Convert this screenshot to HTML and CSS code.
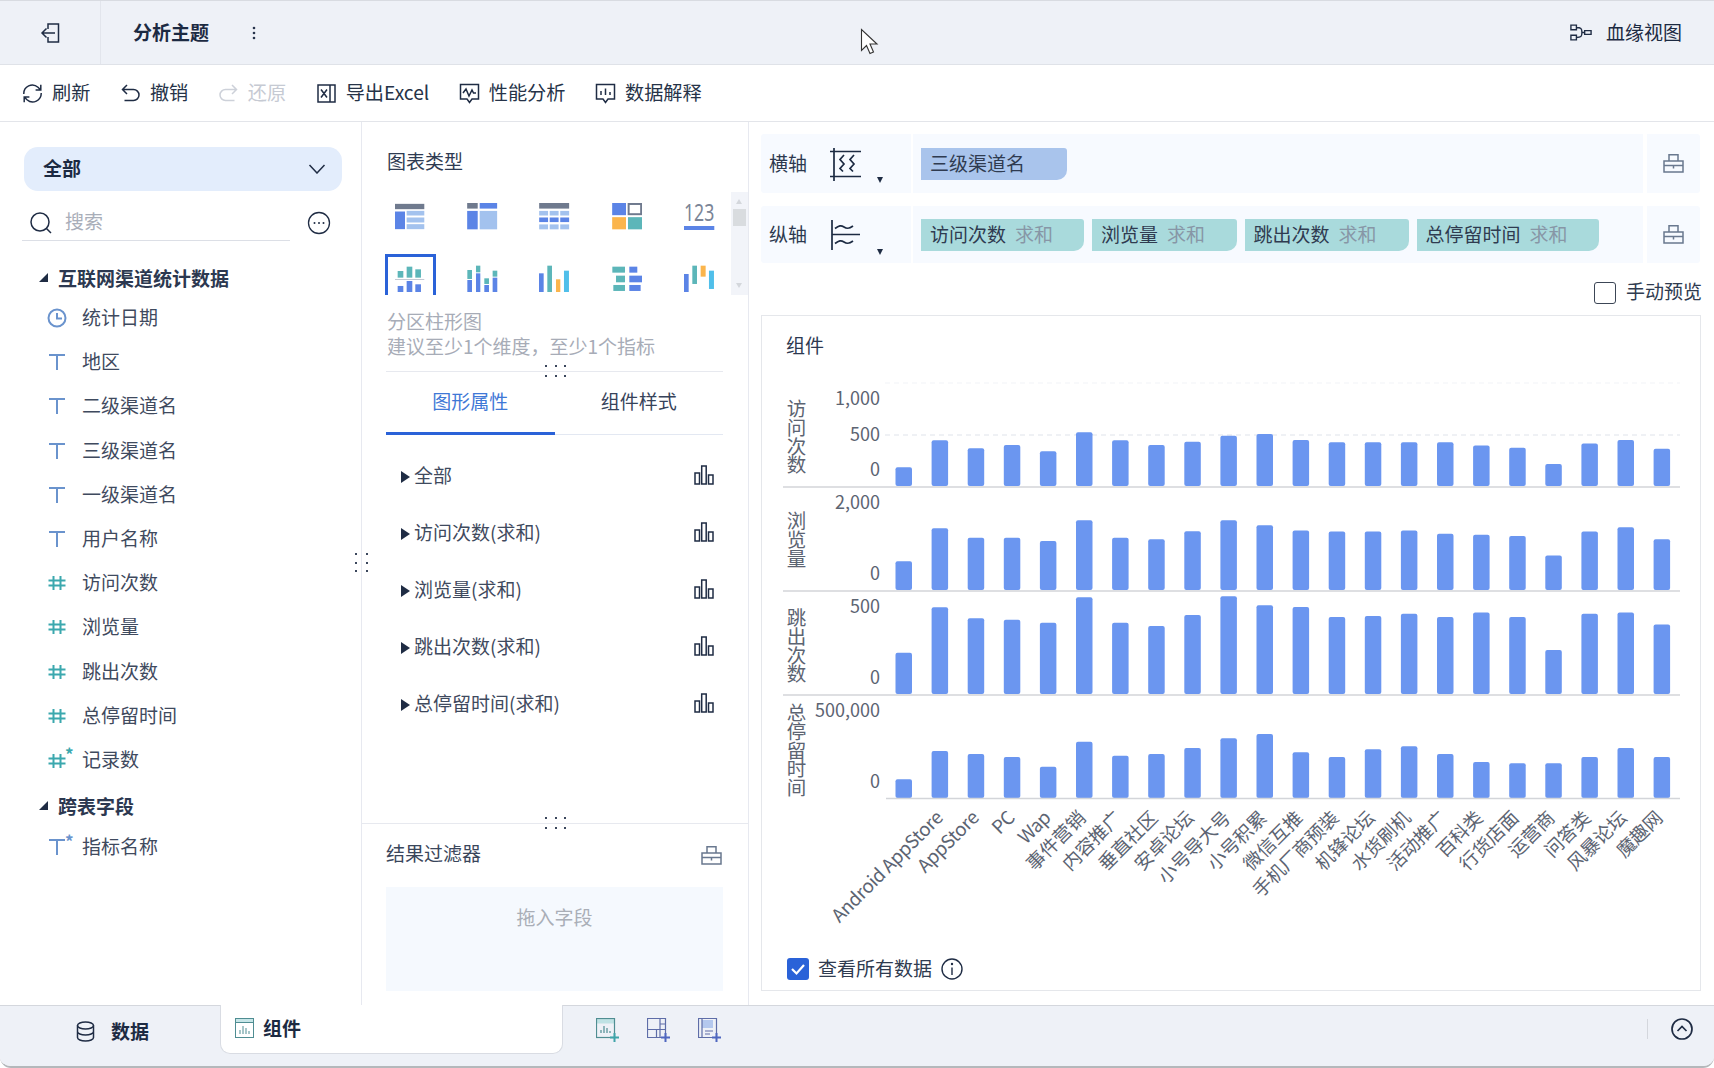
FILE: index.html
```html
<!DOCTYPE html>
<html lang="zh">
<head>
<meta charset="utf-8">
<title>分析主题</title>
<link rel="stylesheet" href="styles.css">
</head>
<body>
<div class="app">
  <header class="topbar">
    <div class="back">
      <svg class="ico" width="20" height="20" viewBox="0 0 20 20"><path d="M8 6V1h10.500v18H8V14M15 10H2M6.500 5.500L2 10l4.500 4.500"/></svg>
    </div>
    <div class="title">分析主题</div>
    <svg class="kebab" width="4" height="14" viewBox="0 0 4 14"><circle cx="2" cy="2" r="1.300"/><circle cx="2" cy="7" r="1.300"/><circle cx="2" cy="12" r="1.300"/></svg>
    <div class="lineage">
      <svg class="ico" width="22" height="17" viewBox="0 0 24 18"><path d="M1 1h6v5H1zM1 12h6v5H1zM16 7h7v4h-7zM7 3.500c5 0 6 1 6 5.500s-1 5.500-6 5.500M12.500 9H16"/></svg>
      <span>血缘视图</span>
    </div>
  </header>

  <nav class="toolbar">
    <div class="tool"><svg class="ico" width="21" height="21" viewBox="0 0 21 21"><path d="M1.800 11A8.500 8.500 0 0 1 16 4.300L18.500 6.800M18.800 1.800v5.200h-5.200M19.200 10A8.500 8.500 0 0 1 5 16.700L2.500 14.200M2.200 19.200V14h5.200"/></svg><span>刷新</span></div>
    <div class="tool"><svg class="ico" width="21" height="21" viewBox="0 0 20 21"><path d="M6.500 2L2 6.500 6.500 11M2 6.500h11a5.500 5.500 0 0 1 0 11H4"/></svg><span>撤销</span></div>
    <div class="tool tool-off"><svg class="ico" width="21" height="21" viewBox="0 0 20 21"><path d="M13.500 2L18 6.500 13.500 11M18 6.500H7a5.500 5.500 0 0 0 0 11h9"/></svg><span>还原</span></div>
    <div class="tool"><svg class="ico" width="21" height="21" viewBox="0 0 21 21"><path d="M2 2h12v17H2zM14 2h5v17h-5M5 6.500l6 8M11 6.500l-6 8"/></svg><span>导出Excel</span></div>
    <div class="tool"><svg class="ico" width="21" height="21" viewBox="0 0 21 21"><path d="M1.500 1.500h18v14.500h-6.500l-2.500 3.500L8 16H1.500zM4 10l3-4 3 7 3-6 1.500 3H17"/></svg><span>性能分析</span></div>
    <div class="tool"><svg class="ico" width="21" height="21" viewBox="0 0 21 21"><path d="M1.500 1.500h18v14.500h-6.500l-2.500 3.500L8 16H1.500zM6 8v4M10.500 5.500V12M15 9v3"/></svg><span>数据解释</span></div>
  </nav>

  <main class="main">
    <aside class="fields">
      <div class="select"><span>全部</span><svg class="ico" width="18" height="10" viewBox="0 0 18 10"><path d="M1.500 1l7.500 8 7.500-8"/></svg></div>
      <div class="search-row">
        <div class="search">
          <svg class="ico" width="24" height="24" viewBox="0 0 24 24"><circle cx="11" cy="11" r="9"/><path d="M17.500 17.500L22 22"/></svg>
          <span>搜索</span>
        </div>
        <svg class="ico more" width="24" height="24" viewBox="0 0 24 24"><circle cx="12" cy="12" r="10.500"/><circle class="solid" cx="7.500" cy="12" r="1"/><circle class="solid" cx="12" cy="12" r="1"/><circle class="solid" cx="16.500" cy="12" r="1"/></svg>
      </div>

      <div class="group"><i class="tri-open"></i>互联网渠道统计数据</div>
      <div class="field"><svg class="fi fi-blue" width="20" height="20" viewBox="0 0 20 20"><circle cx="10" cy="10" r="8.500"/><path d="M10 5v5.500h5"/></svg><span>统计日期</span></div>
      <div class="field"><svg class="fi fi-blue" width="20" height="20" viewBox="0 0 20 20"><path d="M2 3h16M10 3v15"/></svg><span>地区</span></div>
      <div class="field"><svg class="fi fi-blue" width="20" height="20" viewBox="0 0 20 20"><path d="M2 3h16M10 3v15"/></svg><span>二级渠道名</span></div>
      <div class="field"><svg class="fi fi-blue" width="20" height="20" viewBox="0 0 20 20"><path d="M2 3h16M10 3v15"/></svg><span>三级渠道名</span></div>
      <div class="field"><svg class="fi fi-blue" width="20" height="20" viewBox="0 0 20 20"><path d="M2 3h16M10 3v15"/></svg><span>一级渠道名</span></div>
      <div class="field"><svg class="fi fi-blue" width="20" height="20" viewBox="0 0 20 20"><path d="M2 3h16M10 3v15"/></svg><span>用户名称</span></div>
      <div class="field"><svg class="fi fi-teal" width="20" height="20" viewBox="0 0 20 20"><path d="M6.500 3v14M13.500 3v14M1.500 7.500h17M1.500 12.500h17"/></svg><span>访问次数</span></div>
      <div class="field"><svg class="fi fi-teal" width="20" height="20" viewBox="0 0 20 20"><path d="M6.500 3v14M13.500 3v14M1.500 7.500h17M1.500 12.500h17"/></svg><span>浏览量</span></div>
      <div class="field"><svg class="fi fi-teal" width="20" height="20" viewBox="0 0 20 20"><path d="M6.500 3v14M13.500 3v14M1.500 7.500h17M1.500 12.500h17"/></svg><span>跳出次数</span></div>
      <div class="field"><svg class="fi fi-teal" width="20" height="20" viewBox="0 0 20 20"><path d="M6.500 3v14M13.500 3v14M1.500 7.500h17M1.500 12.500h17"/></svg><span>总停留时间</span></div>
      <div class="field"><svg class="fi fi-teal" width="20" height="20" viewBox="0 0 20 20"><path d="M6.500 4v14M13.500 4v14M1.500 8.500h17M1.500 13.500h17"/></svg><sup class="star star-teal">*</sup><span>记录数</span></div>
      <div class="group group-2"><i class="tri-open"></i>跨表字段</div>
      <div class="field field-2"><svg class="fi fi-blue" width="20" height="20" viewBox="0 0 20 20"><path d="M2 3h16M10 3v15"/></svg><sup class="star star-blue">*</sup><span>指标名称</span></div>
      <div class="vhandle"><i></i><i></i><i></i><i></i><i></i><i></i></div>
    </aside>

    <section class="config">
      <div class="cfg-title">图表类型</div>
      <div class="gallery">
        <div class="types">
          <div class="type"><svg width="29.300" height="27" viewBox="105 220 88 80"><rect class="gy" x="105" y="222" width="88" height="16"/><rect class="bl" x="105" y="245" width="30" height="53"/><rect class="lt" x="140" y="243" width="53" height="14"/><rect class="lt" x="140" y="263" width="53" height="15"/><rect class="lt" x="140" y="283" width="53" height="15"/></svg></div>
          <div class="type"><svg width="30.300" height="27" viewBox="320 218 91 82"><rect class="gy" x="320" y="218" width="32" height="17"/><rect class="bl" x="358" y="218" width="53" height="17"/><rect class="bl" x="320" y="242" width="32" height="56"/><rect class="lt" x="358" y="242" width="53" height="56"/></svg></div>
          <div class="type"><svg width="30.300" height="27" viewBox="537 218 91 82"><rect class="gy" x="537" y="218" width="91" height="17"/><rect class="lt" x="537" y="242" width="27" height="14"/><rect class="lt" x="569" y="242" width="27" height="14"/><rect class="lt" x="601" y="242" width="27" height="14"/><rect class="bl" x="537" y="262" width="27" height="14"/><rect class="bl" x="569" y="262" width="27" height="14"/><rect class="bl" x="601" y="262" width="27" height="14"/><rect class="lt" x="537" y="283" width="27" height="15"/><rect class="lt" x="569" y="283" width="27" height="15"/><rect class="lt" x="601" y="283" width="27" height="15"/></svg></div>
          <div class="type"><svg width="30.300" height="27" viewBox="756 218 91 82"><rect class="bl" x="756" y="218" width="42" height="37"/><rect class="outl" x="806" y="221" width="38" height="31"/><rect class="or" x="756" y="261" width="42" height="37"/><rect class="te" x="804" y="261" width="43" height="37"/></svg></div>
          <div class="type"><svg class="num-ico" width="30.300" height="27" viewBox="0 0 30.300 27"><text class="num" x="0" y="18" textLength="30.300" lengthAdjust="spacingAndGlyphs">123</text><rect class="bl" x="0" y="23" width="30.300" height="4"/></svg></div>

          <div class="type type-on"><svg width="29.300" height="27.300" viewBox="105 405 88 82"><rect class="te" x="113" y="423" width="17" height="20"/><rect class="te" x="140" y="410" width="17" height="33"/><rect class="te" x="166" y="418" width="17" height="25"/><rect class="line" x="105" y="447" width="88" height="3"/><rect class="bl" x="113" y="468" width="17" height="19"/><rect class="bl" x="140" y="453" width="17" height="34"/><rect class="bl" x="166" y="463" width="17" height="24"/></svg></div>
          <div class="type"><svg width="30.300" height="27.300" viewBox="320 405 91 82"><rect class="te" x="321" y="420" width="14" height="27"/><rect class="bl" x="321" y="450" width="14" height="37"/><rect class="te" x="347" y="407" width="13" height="20"/><rect class="bl" x="347" y="430" width="13" height="57"/><rect class="te" x="372" y="445" width="14" height="17"/><rect class="bl" x="372" y="465" width="14" height="22"/><rect class="te" x="397" y="422" width="14" height="18"/><rect class="bl" x="397" y="443" width="14" height="44"/></svg></div>
          <div class="type"><svg width="30.300" height="27.300" viewBox="537 405 91 82"><rect class="bl" x="537" y="430" width="14" height="57"/><rect class="te" x="562" y="407" width="14" height="80"/><rect class="or" x="588" y="448" width="13" height="39"/><rect class="sk" x="612" y="422" width="15" height="65"/></svg></div>
          <div class="type"><svg width="30.300" height="27.300" viewBox="756 405 91 82"><rect class="te" x="757" y="410" width="38" height="18"/><rect class="bl" x="808" y="410" width="24" height="18"/><rect class="te" x="768" y="437" width="27" height="20"/><rect class="bl" x="808" y="437" width="39" height="20"/><rect class="te" x="760" y="465" width="35" height="18"/><rect class="bl" x="808" y="465" width="34" height="18"/></svg></div>
          <div class="type"><svg width="30.300" height="27.300" viewBox="972 405 91 82"><rect class="bl" x="972" y="432" width="14" height="55"/><rect class="te" x="997" y="407" width="14" height="55"/><rect class="or" x="1022" y="407" width="15" height="33"/><rect class="sk" x="1047" y="422" width="15" height="55"/></svg></div>
        </div>
        <div class="scroll"><i class="up"></i><b></b><i class="down"></i></div>
      </div>
      <div class="desc"><div>分区柱形图</div><div>建议至少1个维度，至少1个指标</div></div>
      <div class="tabs-wrap">
        <div class="hhandle hhandle-top"><i></i><i></i><i></i><i></i><i></i><i></i></div>
        <div class="tabs"><div class="tab tab-on">图形属性</div><div class="tab">组件样式</div></div>
      </div>
      <div class="attrs">
        <div class="attr"><i class="tri-right"></i><span>全部</span><svg class="ico bars" width="20" height="20" viewBox="0 0 20 20"><path d="M1 8h4.500v11H1zM7.700 1h4.500v18H7.700zM14.500 10H19v9h-4.500z"/></svg></div>
        <div class="attr"><i class="tri-right"></i><span>访问次数(求和)</span><svg class="ico bars" width="20" height="20" viewBox="0 0 20 20"><path d="M1 8h4.500v11H1zM7.700 1h4.500v18H7.700zM14.500 10H19v9h-4.500z"/></svg></div>
        <div class="attr"><i class="tri-right"></i><span>浏览量(求和)</span><svg class="ico bars" width="20" height="20" viewBox="0 0 20 20"><path d="M1 8h4.500v11H1zM7.700 1h4.500v18H7.700zM14.500 10H19v9h-4.500z"/></svg></div>
        <div class="attr"><i class="tri-right"></i><span>跳出次数(求和)</span><svg class="ico bars" width="20" height="20" viewBox="0 0 20 20"><path d="M1 8h4.500v11H1zM7.700 1h4.500v18H7.700zM14.500 10H19v9h-4.500z"/></svg></div>
        <div class="attr"><i class="tri-right"></i><span>总停留时间(求和)</span><svg class="ico bars" width="20" height="20" viewBox="0 0 20 20"><path d="M1 8h4.500v11H1zM7.700 1h4.500v18H7.700zM14.500 10H19v9h-4.500z"/></svg></div>
      </div>
      <div class="filter">
        <div class="hhandle hhandle-bot"><i></i><i></i><i></i><i></i><i></i><i></i></div>
        <div class="filter-head"><span>结果过滤器</span><svg class="ico-soft" width="21" height="19" viewBox="0 0 21 19"><path d="M1 7h19v11H1zM6 7V.8h9V7M1 11.500h19M10.500 11.500v3"/></svg></div>
        <div class="drop">拖入字段</div>
      </div>
    </section>

    <section class="stage">
      <div class="axis">
        <div class="axis-name"><span>横轴</span>
          <svg class="ico ax" width="34" height="34" viewBox="0 0 34 34"><path d="M1 4.500h31M1 29.500h31M5 1v33M15 8l-4 4.500 4 4.500-4 4.500 3 3M25 8l-4 4.500 4 4.500-4 4.500 3 3"/></svg><i class="tri-down"></i></div>
        <div class="axis-body"><div class="chip chip-blue"><span>三级渠道名</span></div></div>
        <div class="axis-tail"><svg class="ico-soft" width="21" height="19" viewBox="0 0 21 19"><path d="M1 7h19v11H1zM6 7V.8h9V7M1 11.500h19M10.500 11.500v3"/></svg></div>
      </div>
      <div class="axis axis-y">
        <div class="axis-name"><span>纵轴</span>
          <svg class="ico ax" width="34" height="32" viewBox="0 0 34 32"><path d="M3 1v30M3 15.500h28M6 9.500c4-3 6-3.500 9-1.500s5 2 9-1M6 24.500c4-3 6-3.500 9-1.500s5 2 9-1"/></svg><i class="tri-down"></i></div>
        <div class="axis-body">
          <div class="chip w1"><span>访问次数</span><em>求和</em></div>
          <div class="chip w2"><span>浏览量</span><em>求和</em></div>
          <div class="chip w3"><span>跳出次数</span><em>求和</em></div>
          <div class="chip w4"><span>总停留时间</span><em>求和</em></div>
        </div>
        <div class="axis-tail"><svg class="ico-soft" width="21" height="19" viewBox="0 0 21 19"><path d="M1 7h19v11H1zM6 7V.8h9V7M1 11.500h19M10.500 11.500v3"/></svg></div>
      </div>
      <div class="manual"><i class="box"></i><span>手动预览</span></div>
      <div class="card">
        <div class="card-title">组件</div>
        <svg class="chart" width="938" height="570" viewBox="762 375 938 570">
          <line class="grid-top" x1="885" x2="1680" y1="383" y2="383"/>
          <line class="grid" x1="885" x2="1680" y1="435" y2="435"/>

          <text class="vt" x="796.500" y="399">访问次数</text>
          <text class="vt" x="796.500" y="511">浏览量</text>
          <text class="vt" x="796.500" y="608">跳出次数</text>
          <text class="vt" x="796.500" y="703">总停留时间</text>

          <text class="yl" x="880" y="397">1,000</text>
          <text class="yl" x="880" y="433">500</text>
          <text class="yl" x="880" y="468">0</text>
          <text class="yl" x="880" y="501">2,000</text>
          <text class="yl" x="880" y="572">0</text>
          <text class="yl" x="880" y="605">500</text>
          <text class="yl" x="880" y="676">0</text>
          <text class="yl" x="880" y="709">500,000</text>
          <text class="yl" x="880" y="780">0</text>

          <g transform="translate(0 486) scale(1 -1)">
            <rect class="bar" x="895.500" height="18.700"/><rect class="bar" x="931.600" height="45.700"/><rect class="bar" x="967.700" height="37.700"/><rect class="bar" x="1003.800" height="41"/><rect class="bar" x="1039.900" height="34.700"/><rect class="bar" x="1076" height="53.700"/><rect class="bar" x="1112.100" height="45.700"/><rect class="bar" x="1148.200" height="41"/><rect class="bar" x="1184.300" height="44.300"/><rect class="bar" x="1220.400" height="50.300"/><rect class="bar" x="1256.500" height="52"/><rect class="bar" x="1292.600" height="46"/><rect class="bar" x="1328.700" height="43.700"/><rect class="bar" x="1364.800" height="43.700"/><rect class="bar" x="1400.900" height="43.700"/><rect class="bar" x="1437" height="43.700"/><rect class="bar" x="1473.100" height="40.400"/><rect class="bar" x="1509.200" height="38.300"/><rect class="bar" x="1545.300" height="21.900"/><rect class="bar" x="1581.400" height="42.600"/><rect class="bar" x="1617.500" height="46"/><rect class="bar" x="1653.600" height="37.200"/>
          </g>
          <g transform="translate(0 590) scale(1 -1)">
            <rect class="bar" x="895.500" height="28.700"/><rect class="bar" x="931.600" height="61.700"/><rect class="bar" x="967.700" height="52.300"/><rect class="bar" x="1003.800" height="52.300"/><rect class="bar" x="1039.900" height="49"/><rect class="bar" x="1076" height="69.700"/><rect class="bar" x="1112.100" height="52.300"/><rect class="bar" x="1148.200" height="50.700"/><rect class="bar" x="1184.300" height="58.700"/><rect class="bar" x="1220.400" height="69.700"/><rect class="bar" x="1256.500" height="64.700"/><rect class="bar" x="1292.600" height="59.600"/><rect class="bar" x="1328.700" height="58.500"/><rect class="bar" x="1364.800" height="58.500"/><rect class="bar" x="1400.900" height="59.600"/><rect class="bar" x="1437" height="56.300"/><rect class="bar" x="1473.100" height="55.200"/><rect class="bar" x="1509.200" height="54"/><rect class="bar" x="1545.300" height="34.400"/><rect class="bar" x="1581.400" height="58.500"/><rect class="bar" x="1617.500" height="62.800"/><rect class="bar" x="1653.600" height="50.800"/>
          </g>
          <g transform="translate(0 694) scale(1 -1)">
            <rect class="bar" x="895.500" height="41.300"/><rect class="bar" x="931.600" height="86.700"/><rect class="bar" x="967.700" height="75.700"/><rect class="bar" x="1003.800" height="74.300"/><rect class="bar" x="1039.900" height="71.300"/><rect class="bar" x="1076" height="96.700"/><rect class="bar" x="1112.100" height="71.300"/><rect class="bar" x="1148.200" height="68"/><rect class="bar" x="1184.300" height="79"/><rect class="bar" x="1220.400" height="97.700"/><rect class="bar" x="1256.500" height="88.700"/><rect class="bar" x="1292.600" height="87"/><rect class="bar" x="1328.700" height="77"/><rect class="bar" x="1364.800" height="78"/><rect class="bar" x="1400.900" height="80.300"/><rect class="bar" x="1437" height="77"/><rect class="bar" x="1473.100" height="81.400"/><rect class="bar" x="1509.200" height="77"/><rect class="bar" x="1545.300" height="44"/><rect class="bar" x="1581.400" height="80.300"/><rect class="bar" x="1617.500" height="81.400"/><rect class="bar" x="1653.600" height="69.400"/>
          </g>
          <g transform="translate(0 798) scale(1 -1)">
            <rect class="bar" x="895.500" height="18.700"/><rect class="bar" x="931.600" height="47"/><rect class="bar" x="967.700" height="44"/><rect class="bar" x="1003.800" height="41"/><rect class="bar" x="1039.900" height="31.300"/><rect class="bar" x="1076" height="56.300"/><rect class="bar" x="1112.100" height="42.300"/><rect class="bar" x="1148.200" height="44"/><rect class="bar" x="1184.300" height="50"/><rect class="bar" x="1220.400" height="59.700"/><rect class="bar" x="1256.500" height="64"/><rect class="bar" x="1292.600" height="45.700"/><rect class="bar" x="1328.700" height="41"/><rect class="bar" x="1364.800" height="48.700"/><rect class="bar" x="1400.900" height="51.700"/><rect class="bar" x="1437" height="44"/><rect class="bar" x="1473.100" height="36"/><rect class="bar" x="1509.200" height="34.700"/><rect class="bar" x="1545.300" height="34.700"/><rect class="bar" x="1581.400" height="41"/><rect class="bar" x="1617.500" height="50"/><rect class="bar" x="1653.600" height="41"/>
          </g>

          <line class="base" x1="783" x2="1680" y1="487" y2="487"/>
          <line class="base" x1="783" x2="1680" y1="591" y2="591"/>
          <line class="base" x1="783" x2="1680" y1="695" y2="695"/>
          <line class="base" x1="886" x2="1680" y1="798.500" y2="798.500"/>

          <text class="xl xl-en" transform="translate(944 819) rotate(-45)">Android AppStore</text>
          <text class="xl xl-en" transform="translate(980 819) rotate(-45)">AppStore</text>
          <text class="xl xl-en" transform="translate(1016 819) rotate(-45)">PC</text>
          <text class="xl xl-en" transform="translate(1052 819) rotate(-45)">Wap</text>
          <text class="xl" transform="translate(1087 819) rotate(-45)">事件营销</text>
          <text class="xl" transform="translate(1123 819) rotate(-45)">内容推广</text>
          <text class="xl" transform="translate(1159 819) rotate(-45)">垂直社区</text>
          <text class="xl" transform="translate(1195 819) rotate(-45)">安卓论坛</text>
          <text class="xl" transform="translate(1232 819) rotate(-45)">小号导大号</text>
          <text class="xl" transform="translate(1268 819) rotate(-45)">小号积累</text>
          <text class="xl" transform="translate(1304 819) rotate(-45)">微信互推</text>
          <text class="xl" transform="translate(1340 819) rotate(-45)">手机厂商预装</text>
          <text class="xl" transform="translate(1376 819) rotate(-45)">机锋论坛</text>
          <text class="xl" transform="translate(1412 819) rotate(-45)">水货刷机</text>
          <text class="xl" transform="translate(1448 819) rotate(-45)">活动推广</text>
          <text class="xl" transform="translate(1484 819) rotate(-45)">百科类</text>
          <text class="xl" transform="translate(1520 819) rotate(-45)">行货店面</text>
          <text class="xl" transform="translate(1556 819) rotate(-45)">运营商</text>
          <text class="xl" transform="translate(1592 819) rotate(-45)">问答类</text>
          <text class="xl" transform="translate(1628 819) rotate(-45)">风暴论坛</text>
          <text class="xl" transform="translate(1664 819) rotate(-45)">魔趣网</text>
        </svg>
        <div class="card-foot">
          <svg class="check" width="22" height="22" viewBox="0 0 22 22"><rect width="22" height="22" rx="3"/><path d="M5 11l4.500 4.500L17 7"/></svg>
          <span>查看所有数据</span>
          <svg class="ico info" width="22" height="22" viewBox="0 0 22 22"><circle cx="11" cy="11" r="10"/><path d="M11 9.500V17"/><circle class="solid" cx="11" cy="6" r="1.200"/></svg>
        </div>
      </div>
    </section>
  </main>

  <footer class="bottom">
    <div class="data-tab">
      <svg class="ico" width="19" height="21" viewBox="0 0 19 21"><ellipse cx="9.500" cy="4.500" rx="8" ry="3.500"/><path d="M1.500 4.500v12c0 2 3.500 3.500 8 3.500s8-1.500 8-3.500v-12M1.500 10.500c0 2 3.500 3.500 8 3.500s8-1.500 8-3.500"/></svg>
      <b>数据</b>
    </div>
    <div class="sheet-tab">
      <svg class="sheet-ico" width="19" height="20" viewBox="0 0 19 20"><rect class="sheet-head" x=".5" y=".5" width="18" height="4"/><rect x=".5" y=".5" width="18" height="19"/><path d="M5 16v-4M8 16V8M11 16v-6M14 16v-3"/></svg>
      <b>组件</b>
    </div>
    <div class="adders">
      <svg class="add" width="24" height="24" viewBox="0 0 24 24"><rect class="a-head" x=".5" y=".5" width="18" height="5"/><rect class="a-teal" x=".5" y=".5" width="18" height="19"/><path class="a-teal" d="M5 15v-3M8 15V8M11 15v-5M14 15v-2"/><path class="a-plus-teal" d="M14 19.500h9M18.500 15v9"/></svg>
      <svg class="add" width="24" height="24" viewBox="0 0 24 24"><path class="a-ind" d="M.5.500h18v19H.5zM.5 11.500h18M9.500 11.500v8M13 .5v19M13 6h5.500"/><path class="a-plus" d="M14 19.500h9M18.500 15v9"/></svg>
      <svg class="add" width="24" height="24" viewBox="0 0 24 24"><rect class="a-fill" x="4" y="2" width="11" height="8"/><path class="a-ind" d="M.5.500h18v19H.5zM4 .5v19M7 13h8M7 16h5"/><path class="a-plus" d="M14 19.500h9M18.500 15v9"/></svg>
    </div>
    <div class="bottom-end">
      <i class="sep"></i>
      <svg class="ico chev" width="22" height="22" viewBox="0 0 22 22"><circle cx="11" cy="11" r="10"/><path d="M6.500 13l4.500-4.500 4.500 4.500"/></svg>
    </div>
  </footer>

  <svg class="cursor" width="20" height="27" viewBox="0 0 20 27"><path d="M1.500 1.500v21l5-5 3.500 8 3.500-1.500-3.500-8h7z"/></svg>
</div>
</body>
</html>
```
FILE: styles.css
```css
* { box-sizing: border-box; }
html, body { margin: 0; padding: 0; background: #fff; }
body {
  font-family: "Noto Sans CJK SC", "Noto Sans", sans-serif;
  font-size: 19px;
  color: #37435a;
  line-height: 28px;
}
i, em { font-style: normal; display: block; }

.app {
  position: relative;
  width: 1714px;
  height: 1068px;
  display: flex;
  flex-direction: column;
  overflow: hidden;
  border-bottom: 2px solid #b4b8bb;
  border-radius: 0 0 11px 11px;
}

.ico { fill: none; stroke: #1f2c44; stroke-width: 1.500; flex: none; }
.ico .solid { fill: #1f2c44; stroke: none; }
.ico-soft { fill: none; stroke: #69788f; stroke-width: 1.500; flex: none; }

.tool span, .card-foot span, .select span, .search span { padding-bottom: 3px; }
.field span, .lineage span, .chip span, .chip em { padding-bottom: 2px; }
.attr span, .manual span { padding-bottom: 4px; }

/* top bar */
.topbar {
  height: 65px;
  flex: none;
  display: flex;
  align-items: center;
  background: #eef1f7;
  border-top: 1px solid #d8dbe1;
  border-bottom: 1px solid #dfe2e8;
  color: #1c2a42;
}
.back {
  width: 101px;
  height: 100%;
  flex: none;
  padding: 0 0 0 40px;
  display: flex;
  align-items: center;
  border-right: 1px solid #e2e5ec;
}
.title { margin-left: 32px; font-weight: 700; padding-bottom: 1px; }
.kebab { margin-left: 43px; fill: #27344c; }
.lineage { margin-left: auto; margin-right: 32px; display: flex; align-items: center; gap: 14px; }

/* toolbar */
.toolbar {
  height: 57px;
  flex: none;
  display: flex;
  align-items: center;
  gap: 29.500px;
  padding-left: 22px;
  border-bottom: 1px solid #e3e5ea;
  color: #263348;
  font-size: 19.200px;
}
.tool { display: flex; align-items: center; gap: 9px; }
.tool-off { color: #c6cad3; }
.tool-off .ico { stroke: #cdd1d9; }

/* layout */
.main { flex: 1; display: flex; min-height: 0; }

/* left fields */
.fields {
  position: relative;
  width: 362px;
  flex: none;
  border-right: 1px solid #e7e9f0;
  padding-top: 25px;
}
.select {
  margin-left: 24px;
  width: 318px;
  height: 44px;
  padding: 0 16px 0 19px;
  display: flex;
  align-items: center;
  justify-content: space-between;
  background: #e3edfc;
  border-radius: 14px;
  font-weight: 700;
  color: #1c2a42;
}
.search-row { display: flex; align-items: center; margin: 14px 0 0 22px; gap: 17px; }
.search {
  width: 268px;
  height: 36px;
  display: flex;
  align-items: center;
  gap: 12px;
  padding-left: 7px;
  border-bottom: 1px solid #dcdfe6;
  color: #a9aeb9;
}
.more { stroke-width: 1.300; }
.group {
  height: 34px;
  margin-top: 21px;
  padding: 0 0 3px 39px;
  display: flex;
  align-items: center;
  font-weight: 700;
  color: #2c3850;
}
.group-2 { margin-top: 8px; }
.tri-open {
  width: 0;
  height: 0;
  margin-right: 10px;
  border-style: solid;
  border-width: 0 0 9px 9px;
  border-color: transparent transparent #1f2c44 transparent;
}
.field {
  position: relative;
  height: 44.200px;
  display: flex;
  align-items: center;
  gap: 15px;
  padding-left: 47px;
  color: #3f4a5e;
}
.field-2 { margin-top: 1px; }
.fi { fill: none; stroke-width: 2; flex: none; }
.fi-blue { stroke: #6a93cd; }
.fi-teal { stroke: #3ba8ae; }
.star { position: absolute; left: 65px; top: 8px; font-size: 17px; line-height: 16px; font-weight: 700; margin: 0; }
.star-teal { color: #3ba8ae; }
.star-blue { color: #6a93cd; }
.vhandle {
  position: absolute;
  left: 355px;
  top: 431px;
  display: grid;
  grid-template-columns: 2px 2px;
  column-gap: 8.500px;
  row-gap: 6.500px;
}
.vhandle i { width: 2px; height: 2px; background: #3b475c; }

/* middle config */
.config {
  width: 387px;
  flex: none;
  display: flex;
  flex-direction: column;
  border-right: 1px solid #e7e9f0;
}
.cfg-title { padding: 25px 0 0 25px; height: 70px; color: #2f3b52; }
.gallery { display: flex; height: 103px; }
.types {
  width: 369px;
  padding-left: 12px;
  display: grid;
  grid-template-columns: repeat(5, 72.250px);
  grid-template-rows: 62px 41px;
  justify-items: center;
}
.type { padding-top: 11px; width: 51px; display: flex; justify-content: center; align-items: flex-start; }
.type svg { display: block; }
.type .num-ico { overflow: visible; }
.type-on { border: 3px solid #2a62d8; border-bottom: 0; padding-top: 8px; }
.gy { fill: #6f7a8e; }
.bl { fill: #5b84e6; }
.lt { fill: #a3c2ee; }
.te { fill: #5cb6b9; }
.or { fill: #fbb54c; }
.sk { fill: #50bfea; }
.line { fill: #c3c9d3; }
.outl { fill: none; stroke: #6f7a8e; stroke-width: 6; }
.num { font-size: 24px; fill: #7b8597; font-family: "Noto Sans", sans-serif; }
.scroll { width: 17px; background: #f2f4f9; position: relative; }
.scroll b { position: absolute; left: 2px; right: 2px; top: 17px; height: 17px; background: #d9dcdf; }
.scroll .up, .scroll .down {
  position: absolute;
  left: 5px;
  width: 0;
  height: 0;
  border-style: solid;
  border-color: transparent;
}
.scroll .up { top: 7px; border-width: 0 3.500px 5px; border-bottom-color: #d4d7dc; }
.scroll .down { bottom: 7px; border-width: 5px 3.500px 0; border-top-color: #d4d7dc; }
.desc { padding: 13px 0 0 25px; height: 76px; line-height: 25px; color: #a7acb7; }
.tabs-wrap { position: relative; margin: 0 25px 0 24px; border-top: 1px solid #e7e9ef; }
.hhandle {
  position: absolute;
  display: grid;
  grid-template-columns: repeat(3, 2px);
  column-gap: 7.500px;
  row-gap: 8px;
}
.hhandle i { width: 2px; height: 2px; background: #3b475c; }
.hhandle-top { left: 159px; top: -7px; }
.hhandle-bot { left: 183px; top: -7px; }
.tabs { display: flex; border-bottom: 1px solid #e3e8f2; }
.tab {
  flex: 1;
  height: 63px;
  padding-top: 15px;
  text-align: center;
  color: #37435a;
  margin-bottom: -1px;
}
.tab-on { color: #3f78d6; border-bottom: 3px solid #2a62d8; }
.attrs { padding: 13px 0 0 39px; flex: 1; }
.attr { height: 57px; display: flex; align-items: center; color: #3f4a5e; padding-right: 34px; }
.tri-right {
  width: 0;
  height: 0;
  margin-right: 4px;
  border-style: solid;
  border-width: 6px 0 6px 9px;
  border-color: transparent transparent transparent #1f2c44;
}
.attr .bars { margin: 0 0 3px auto; stroke-width: 1.500; }
.filter { position: relative; height: 182px; flex: none; border-top: 1px solid #e7e9ef; padding: 15px 25px 0 24px; }
.filter-head { display: flex; align-items: center; justify-content: space-between; padding-right: 1px; color: #3a465b; }
.filter-head svg { margin-top: 5px; }
.drop {
  height: 104px;
  margin-top: 20px;
  padding-top: 16px;
  text-align: center;
  background: #f5f9fe;
  color: #a9aeb7;
}

/* right stage */
.stage { flex: 1; padding: 12px 13px 0 12px; }
.axis { display: flex; gap: 2px; height: 59px; }
.axis-y { margin-top: 13px; height: 57px; }
.axis-name {
  position: relative;
  width: 150px;
  flex: none;
  display: flex;
  align-items: center;
  gap: 22px;
  padding-left: 8px;
  background: #f7faff;
  border-radius: 3px 0 0 3px;
  color: #2d394f;
}
.axis-name span { padding-bottom: 1px; }
.ax { stroke-width: 1.700; stroke: #1c2a42; }
.tri-down {
  position: absolute;
  left: 116px;
  top: 43px;
  width: 0;
  height: 0;
  border-style: solid;
  border-width: 6px 3.500px 0;
  border-color: #1f2c44 transparent transparent;
}
.axis-body {
  width: 730px;
  flex: none;
  display: flex;
  align-items: center;
  gap: 8px;
  padding-left: 8px;
  background: #f7faff;
}
.axis-tail {
  width: 53px;
  flex: none;
  margin-left: 2px;
  display: flex;
  align-items: center;
  justify-content: center;
  background: #f7faff;
  border-radius: 0 3px 3px 0;
}
.chip {
  height: 32px;
  padding-left: 9px;
  display: flex;
  align-items: center;
  gap: 9px;
  background: #a9dadc;
  border-radius: 0 3px 10px 0;
  color: #2f3b50;
}
.chip em { color: #8796a6; }
.chip-blue { background: #a9c4ec; width: 146px; }
.w1 { width: 163px; }
.w2 { width: 144.500px; }
.w3 { width: 164px; }
.w4 { width: 182px; }
.manual {
  margin: 19px -1px 0 0;
  height: 22px;
  display: flex;
  justify-content: flex-end;
  align-items: center;
  gap: 10px;
  color: #2f3b50;
}
.box { width: 22px; height: 22px; border: 1.500px solid #3c4656; border-radius: 3px; }
.card {
  width: 940px;
  height: 676px;
  margin-top: 11px;
  border: 1px solid #e5e7eb;
}
.card-title { height: 59px; padding: 15px 0 0 24px; color: #2c3850; }
.chart { display: block; }
.bar { width: 16.500px; y: 0; fill: #6b96f0; rx: 2px; ry: 2px; }
.grid { stroke: #dfe3ea; stroke-dasharray: 5 4; }
.grid-top { stroke: #f1f3f7; stroke-dasharray: 5 4; }
.base { stroke: #d3d5d9; stroke-width: 1.500; }
.yl { text-anchor: end; dominant-baseline: central; font-size: 18px; fill: #5c6472; }
.vt { writing-mode: vertical-rl; text-orientation: upright; font-size: 19.500px; letter-spacing: -.8px; fill: #5c6472; }
.xl { text-anchor: end; font-size: 18.670px; fill: #5c6472; }
.xl-en { letter-spacing: -.4px; }
.card-foot { height: 45px; padding: 3px 0 0 25px; display: flex; align-items: center; gap: 9px; color: #2f3b50; }
.check rect { fill: #2a62d8; }
.check path { fill: none; stroke: #fff; stroke-width: 2.200; }
.info { stroke-width: 1.400; }

/* bottom bar */
.bottom {
  height: 61px;
  flex: none;
  display: flex;
  background: #eef1f7;
  border-top: 1px solid #d4d7dd;
  color: #1c2a42;
}
.data-tab {
  width: 220px;
  flex: none;
  padding: 0 0 10px 76px;
  display: flex;
  align-items: center;
  gap: 16px;
}
.sheet-tab {
  width: 343px;
  height: 49px;
  flex: none;
  margin-top: -1px;
  padding: 0 0 3px 14px;
  display: flex;
  align-items: center;
  gap: 9px;
  background: #fff;
  border: 1px solid #d9dce3;
  border-top: 0;
  border-radius: 0 0 10px 10px;
}
.sheet-ico { fill: none; stroke: #4f8d92; stroke-width: 1; }
.sheet-head { fill: #c7e6e8; }
.adders { display: flex; gap: 27px; margin-left: 33px; padding-top: 12px; }
.add { fill: none; stroke-width: 1.200; }
.a-head { fill: #bfe2e4; stroke: none; }
.a-teal { stroke: #4f8d92; }
.a-plus-teal { stroke: #3fa4a9; stroke-width: 2; }
.a-ind { stroke: #5e6da8; }
.a-plus { stroke: #4f67c0; stroke-width: 2; }
.a-fill { fill: #b4c8ee; stroke: none; }
.bottom-end { margin-left: auto; padding: 0 21px 14px 0; display: flex; align-items: center; gap: 23px; }
.sep { width: 1px; height: 20px; background: #d4d7dd; }
.chev { stroke-width: 1.700; }

/* screen-capture pointer, floats over the page */
.cursor { position: absolute; left: 860px; top: 28px; fill: #fff; stroke: #333; stroke-width: 1.100; }
```
